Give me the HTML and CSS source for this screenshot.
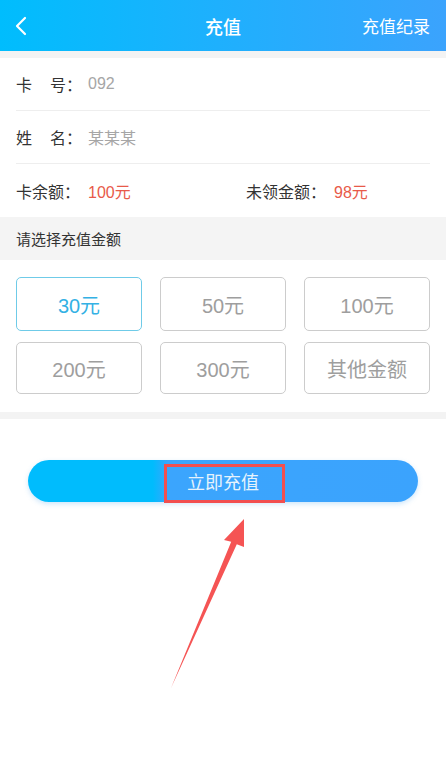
FILE: index.html
```html
<!DOCTYPE html>
<html>
<head>
    <meta charset="utf-8">
    <link rel="stylesheet" href="styles.css">
</head>
<body>
    <div class="header">
        <div class="back">
            <svg width="14" height="20" viewBox="0 0 14 20"><path d="M11 2 L3 10 L11 18" fill="none" stroke="#fff" stroke-width="2.2" stroke-linecap="round" stroke-linejoin="round"/></svg>
        </div>
        <div class="title">充值</div>
        <div class="record">充值纪录</div>
    </div>

    <div class="gap"></div>

    <div class="info">
        <div class="row">
            <span class="label">卡<span class="sp"></span>号：</span>
            <span class="value">092</span>
        </div>
        <div class="row">
            <span class="label">姓<span class="sp"></span>名：</span>
            <span class="value">某某某</span>
        </div>
        <div class="row last">
            <div class="half">
                <span class="label">卡余额：</span>
                <span class="money">100元</span>
            </div>
            <div class="half second">
                <span class="label wide">未领金额：</span>
                <span class="money">98元</span>
            </div>
        </div>
    </div>

    <div class="section-title">请选择充值金额</div>

    <div class="amounts">
        <div class="amount active">30元</div>
        <div class="amount">50元</div>
        <div class="amount">100元</div>
        <div class="amount">200元</div>
        <div class="amount">300元</div>
        <div class="amount">其他金额</div>
    </div>

    <div class="gap"></div>

    <div class="submit-wrap">
        <div class="submit">立即充值</div>
        <div class="mark"></div>
    </div>

    <svg class="arrow" width="446" height="759" viewBox="0 0 446 759">
        <polygon points="244,519 244,547 236.8,544.2 171,688 231.2,541.8 224,540" fill="#f55454"/>
    </svg>
</body>
</html>
```

FILE: styles.css
```css
body {
    margin: 0;
    font-family: "Liberation Sans", "Noto Sans CJK SC", sans-serif;
    background: #fff;
    color: #333;
    width: 446px;
    height: 759px;
    position: relative;
    overflow: hidden;
}

.header {
    height: 51px;
    background: linear-gradient(90deg, #00bdfd 0%, #1cb1fd 45%, #3ba3fd 100%);
    display: flex;
    align-items: center;
    color: #fff;
}

.back {
    width: 120px;
    padding-left: 14px;
    display: flex;
    align-items: center;
    box-sizing: border-box;
}

.title {
    flex-grow: 1;
    text-align: center;
    font-size: 18px;
    font-weight: 500;
}

.record {
    width: 120px;
    text-align: right;
    padding-right: 16px;
    box-sizing: border-box;
    font-size: 17px;
}

.gap {
    height: 7px;
    background: #f3f3f3;
}

.info {
    padding: 0 16px;
}

.row {
    height: 52px;
    border-bottom: 1px solid #eeeeee;
    display: flex;
    align-items: center;
    font-size: 16px;
}

.row.last {
    border-bottom: none;
    height: 53px;
}

.label {
    width: 72px;
    flex-shrink: 0;
    display: inline-block;
    color: #333;
}

.label.wide {
    width: 88px;
}

.sp {
    display: inline-block;
    width: 18px;
}

.value {
    color: #a6a6a6;
}

.half {
    display: flex;
    align-items: center;
    flex: 0 0 230px;
}

.half.second {
    flex: 1 1 auto;
}

.money {
    color: #e85a4a;
}

.section-title {
    height: 43px;
    background: #f4f4f4;
    display: flex;
    align-items: center;
    padding-left: 16px;
    font-size: 15px;
    color: #333;
}

.amounts {
    padding: 17px 16px 18px;
    display: grid;
    grid-template-columns: 1fr 1fr 1fr;
    grid-template-rows: 54px 52px;
    column-gap: 18px;
    row-gap: 11px;
}

.amount {
    border: 1px solid #cccccc;
    border-radius: 5px;
    display: flex;
    align-items: center;
    justify-content: center;
    font-size: 20px;
    color: #9e9e9e;
}

.amount.active {
    border-color: #6fcbe8;
    color: #33b1e4;
}

.submit-wrap {
    position: relative;
    margin: 41px 28px 0;
}

.submit {
    height: 42px;
    border-radius: 21px;
    background: linear-gradient(90deg, #00bcfd 0%, #00bcfd 32%, #3ba5fd 36%, #3ba3fd 100%);
    box-shadow: 0 2px 5px rgba(60, 160, 240, 0.25);
    color: #e6f3fc;
    font-size: 18px;
    display: flex;
    align-items: center;
    justify-content: center;
}

.mark {
    position: absolute;
    left: 136px;
    top: 4px;
    width: 115px;
    height: 33px;
    border: 3px solid #f24f4f;
}

.arrow {
    position: absolute;
    left: 0;
    top: 0;
}
```
